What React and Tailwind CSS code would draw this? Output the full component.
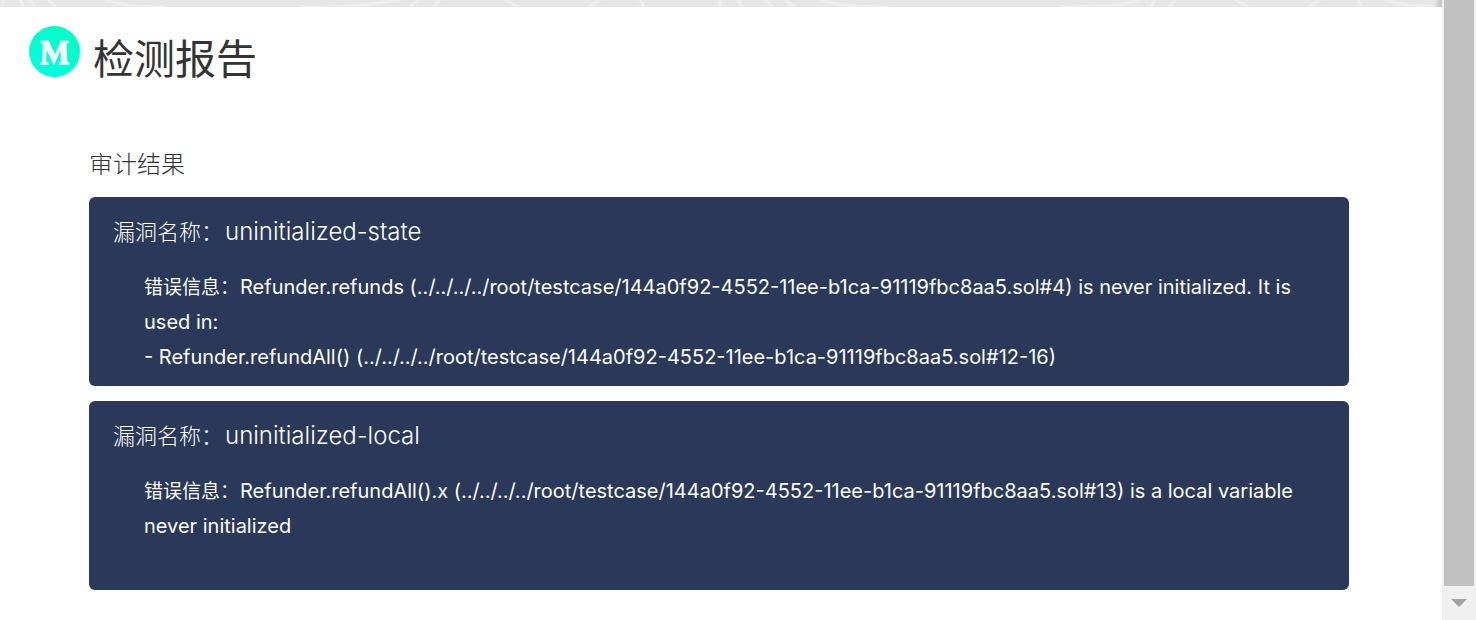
const findings = [
  {
    name: 'uninitialized-state',
    lines: [
      'Refunder.refunds (../../../../root/testcase/144a0f92-4552-11ee-b1ca-91119fbc8aa5.sol#4) is never initialized. It is used in:',
      '- Refunder.refundAll() (../../../../root/testcase/144a0f92-4552-11ee-b1ca-91119fbc8aa5.sol#12-16)',
    ],
  },
  {
    name: 'uninitialized-local',
    lines: [
      'Refunder.refundAll().x (../../../../root/testcase/144a0f92-4552-11ee-b1ca-91119fbc8aa5.sol#13) is a local variable never initialized',
    ],
  },
];

function Logo() {
  return (
    <svg className="size-[51px] shrink-0" viewBox="0 0 51 51" role="img" aria-label="Logo">
      <defs>
        <linearGradient id="logo-fill" x1="0" y1="1" x2="1" y2="0">
          <stop offset="0" stopColor="#00ffe4" />
          <stop offset="1" stopColor="#00ffbf" />
        </linearGradient>
      </defs>
      <circle cx="25.5" cy="25.5" r="25.5" fill="url(#logo-fill)" />
      <path
        fill="#f4fffc"
        d="M11.5 14.500h8.300l6.200 14 5.800-14h7.700v2.200l-1.800 1 .6 17.800 2 1v2.200H30v-2.200l1.800-1-.3-11.500L25.500 38.500h-1.300L17.700 24l-.6 11.500 2.400 1v2.200H11v-2.200l2-1 .8-17.800-2.300-1z"
      />
    </svg>
  );
}

function BannerEdge() {
  return (
    <div className="flex h-[7px] bg-[#e6e6e6]">
      <svg className="h-full min-w-0 flex-1" viewBox="0 0 1434 7" preserveAspectRatio="none" fill="none" aria-hidden="true">
        <g stroke="#eeeeee" strokeWidth="3">
          <path d="M3 0v7M20 0l4 7M30 0l5 7M48 0l8 7M105 0q20 7 60 7M300 7q60 0 100-7M418 0l-8 7M440 0l-6 7M505 0l14 7M600 0l-12 7M640 0l4 7M720 0v7M738 0l4 7M765 0l8 7M785 0l10 7" />
          <path d="M820 0q20 7 70 7M1060 7q60 0 80-7M1155 0l-4 7M1175 0l-6 7M1235 0l14 7M1320 0l-12 7M1358 0l4 7M1385 0q20 6 49 6" />
        </g>
      </svg>
      <div className="w-2 bg-linear-to-r from-[#e6e6e6] to-[#c4c4c4]" />
    </div>
  );
}

function Finding({ name, lines }) {
  return (
    <article className="min-h-[189px] rounded-md bg-[#2a385a] px-6 pt-[15px] pb-[11px] text-white">
      <h3 className="flex items-center leading-10 font-light">
        <span className="w-28 shrink-0 text-[22px]">漏洞名称：</span>
        <span className="text-2xl leading-10">{name}</span>
      </h3>
      <div className="mt-[18px] pr-6 pl-[31px] text-xl leading-[35px]">
        {lines.map((line, index) => (
          <p key={line}>
            {index === 0 && <span className="inline-block w-24 text-[19px]">错误信息：</span>}
            {line}
          </p>
        ))}
      </div>
    </article>
  );
}

export default function App() {
  return (
    <div className="flex min-h-screen bg-white font-['Inter','Noto_Sans_CJK_SC',sans-serif]">
      <div className="min-w-0 flex-1">
        <BannerEdge />
        <header className="flex items-start gap-[13px] pt-[19px] pl-[29px]">
          <Logo />
          <h1 className="pt-[3px] text-[41px] leading-[60px] text-[#333333]">检测报告</h1>
        </header>
        <main className="pt-14 pr-[93px] pb-7 pl-[89px]">
          <h2 className="text-2xl leading-10 font-light text-[#333333]">审计结果</h2>
          <div className="mt-3 flex flex-col gap-[15px]">
            {findings.map((finding) => (
              <Finding key={finding.name} {...finding} />
            ))}
          </div>
        </main>
      </div>
      <aside className="flex w-[34px] shrink-0 flex-col bg-[#f0f0f0] px-0.5" aria-label="Scrollbar">
        <div className="flex-1 bg-[#c1c1c1]" />
        <button type="button" aria-label="Scroll down" className="flex h-[34px] items-center justify-center">
          <svg className="h-2 w-4" viewBox="0 0 16 8" fill="#a3a3a3">
            <path d="M0 0h16L8 8z" />
          </svg>
        </button>
      </aside>
    </div>
  );
}
